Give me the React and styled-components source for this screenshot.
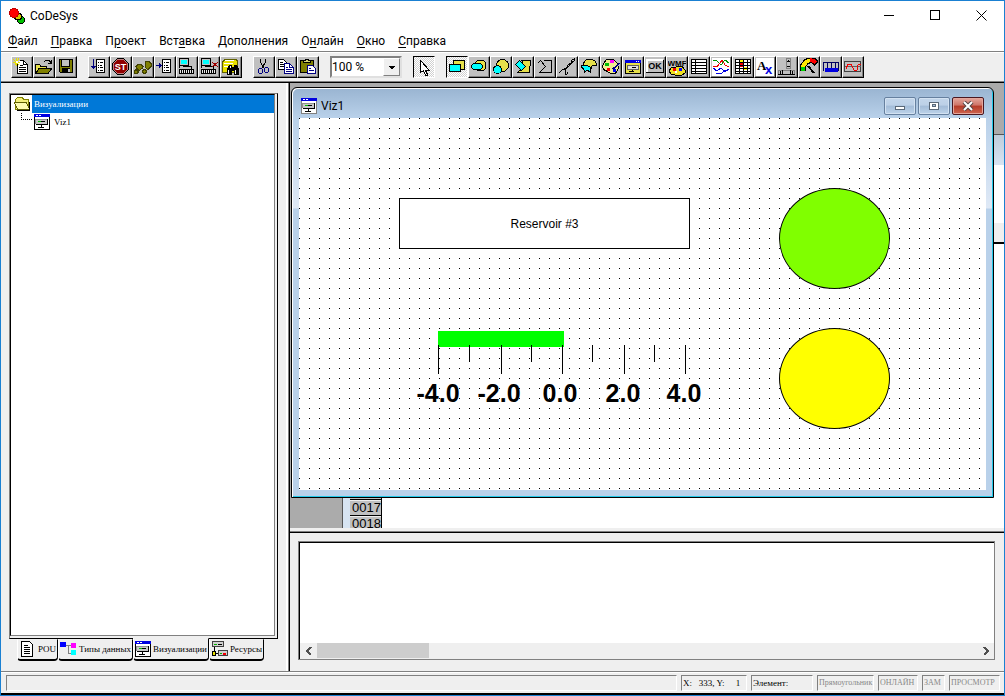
import { useState } from "react";
import styled, { createGlobalStyle, css } from 'styled-components';

const GlobalStyle = createGlobalStyle`
    * {
        box-sizing: border-box;
    }

    html, body, #root {
        height: 100%;
        margin: 0;
    }

    body {
        background: #efefef;
        color: #000;
        font-family: Roboto, 'Open Sans', sans-serif;
        font-size: 12px;
    }

    button, select, textarea {
        border: 0;
        border-radius: 0;
        color: inherit;
        font: inherit;
        margin: 0;
        padding: 0;
    }
`;

const AppFrame = styled.div`
    border: 1px solid #1a80d2;
    display: flex;
    flex-direction: column;
    height: 100%;
    min-height: 500px;
    overflow: hidden;
`;

const TitleBar = styled.header`
    align-items: center;
    background: #fff;
    display: flex;
    gap: 5px;
    height: 29px;
    padding-left: 8px;
`;

const AppTitle = styled.h1`
    flex: 1;
    font-size: 12px;
    font-weight: 400;
    margin: 0;
`;

const CaptionButtons = styled.div`
    display: flex;
`;

const CaptionButton = styled.button`
    align-items: center;
    background: none;
    display: flex;
    height: 28px;
    justify-content: center;
    width: 46px;
`;

const MenuBar = styled.nav`
    align-items: center;
    background: #fff;
    border-bottom: 1px solid #808080;
    display: flex;
    gap: 13px;
    height: 22px;
    padding: 0 7px;
`;

const MenuItem = styled.button`
    background: none;
    line-height: 20px;
    white-space: nowrap;

    u {
        text-underline-offset: 2px;
    }
`;

const ToolBar = styled.div`
    align-items: center;
    border-bottom: 1px solid #000;
    box-shadow: inset 0 1px #fff, inset 0 -1px #808080;
    display: flex;
    flex-shrink: 0;
    gap: 11px;
    height: 31px;
    padding: 0 10px;
`;

const ToolGroup = styled.div`
    display: flex;
`;

const ToolButton = styled.button`
    align-items: flex-start;
    background: #c0c0c0;
    border: 1px solid;
    border-color: #fff #000 #000 #fff;
    box-shadow: inset -1px -1px #808080;
    display: flex;
    height: 22px;
    padding: 1px;
    width: 22px;

    ${({ $pressed }) => $pressed && css`
        background: repeating-conic-gradient(#fff 0 25%, #d0d0d0 0 50%) 0 0 / 2px 2px;
        border-color: #000 #fff #fff #000;
        box-shadow: none;
    `}
`;

const ZoomBox = styled.label`
    background: #fff;
    border: 2px solid;
    border-color: #808080 #e0e0e0 #e0e0e0 #808080;
    display: grid;
    height: 22px;
    width: 72px;
`;

const ZoomSelect = styled.select`
    appearance: none;
    background: none;
    grid-area: 1 / 1;
`;

const ZoomArrow = styled.span`
    align-items: center;
    background: #efefef;
    border: 1px solid;
    border-color: #fff #808080 #808080 #fff;
    display: flex;
    grid-area: 1 / 1;
    justify-content: center;
    justify-self: end;
    pointer-events: none;
    width: 17px;
`;

const Workspace = styled.main`
    display: flex;
    flex: 1;
    min-height: 0;
`;

const SidePanel = styled.aside`
    border-right: 1px solid #000;
    box-shadow: inset -1px 0 #808080, inset -3px 0 #fff;
    display: flex;
    flex: 0 0 289px;
    flex-direction: column;
    padding: 10px 11px 10px 8px;
`;

const TreeFrame = styled.div`
    border: 1px solid;
    border-color: #808080 #000 #000 #808080;
    display: flex;
    flex: 1;
    padding: 0 2px 2px 0;
`;

const Tree = styled.ul`
    background: #fff;
    border: 1px solid;
    border-color: #000 #808080 #808080 #000;
    flex: 1;
    list-style: none;
    margin: 0;
    padding: 0 0 0 3px;
`;

const TreeRow = styled.li`
    align-items: center;
    display: flex;
    font-family: 'Liberation Serif', serif;
    font-size: 9px;
    gap: 2px;
    height: 18px;
    padding-left: ${({ $level }) => $level * 7}px;
`;

const TreeLabel = styled.span`
    background: ${({ $selected }) => ($selected ? '#0078d7' : 'none')};
    color: ${({ $selected }) => ($selected ? '#fff' : '#000')};
    flex: 1;
    line-height: 18px;
    padding-left: 2px;
`;

const TreeBranch = styled.span`
    align-self: flex-start;
    border-bottom: 1px dotted #000;
    border-left: 1px dotted #000;
    height: 7px;
    width: 11px;
`;

const TabList = styled.div`
    display: flex;
    height: 22px;
    padding-left: 8px;
`;

const Tab = styled.button`
    align-items: center;
    background: #efefef;
    border: 1px solid;
    border-color: transparent #000 #000 #fff;
    border-bottom-width: 2px;
    border-radius: 0 0 4px 4px;
    display: flex;
    flex: 0 0 auto;
    font-family: 'Liberation Serif', serif;
    font-size: 9px;
    gap: 2px;
    padding: 0 1px 1px 1px;
    white-space: nowrap;

    ${({ $active }) => $active && css`
        border-top-color: #efefef;
        margin-top: -1px;
    `}
`;

const MainColumn = styled.section`
    display: flex;
    flex: 1;
    flex-direction: column;
    min-width: 0;
`;

const Desktop = styled.div`
    background: #ababab;
    flex: 1;
    min-height: 0;
    overflow: hidden;
    position: relative;
`;

const EditorWindow = styled.div`
    background: #d7e4f2;
    border-left: 1px solid #555;
    border-top: 1px solid #555;
    display: flex;
    flex-direction: column;
    inset: 51px 0 0 52px;
    padding-left: 7px;
    position: absolute;
`;

const EditorTitle = styled.div`
    background: linear-gradient(#bfcddb, #d7e4f2);
    flex: 0 0 30px;
`;

const Declarations = styled.div`
    background: #fff;
    border-bottom: 2px solid #000;
    flex: 0 0 79px;
    padding-top: 58px;
`;

const DeclarationScroll = styled.div`
    background: #efefef;
    height: 19px;
`;

const CodeLines = styled.ol`
    background: #fff;
    flex: 1;
    list-style: none;
    margin: 0;
    min-height: 0;
    overflow: hidden;
    padding: 0;
`;

const CodeLine = styled.li`
    background: #c0c0c0;
    border-bottom: 1px solid #000;
    border-right: 1px solid #000;
    box-shadow: inset 0 1px #efefef;
    font: 13px/16px 'Liberation Sans', Arial, sans-serif;
    height: 16px;
    padding-left: 2px;
    width: 32px;
`;

const VizWindow = styled.div`
    background: linear-gradient(#99b4d1, #b9d1ea 30px, #dfe9f6 120px, #b9d1ea 121px);
    border: 1px solid #000;
    border-radius: 6px 6px 0 0;
    box-shadow: inset 1px 1px #fff, inset -1px -1px #22c8e8;
    display: flex;
    flex-direction: column;
    inset: 4px 10px 30px 1px;
    padding: 0 7px 7px 7px;
    position: absolute;
`;

const VizTitleBar = styled.div`
    align-items: center;
    display: flex;
    flex: 0 0 30px;
    gap: 4px;
    padding: 5px 2px 0 2px;
`;

const VizTitle = styled.h2`
    flex: 1;
    font-size: 12px;
    font-weight: 400;
    margin: 0;
`;

const VizButtons = styled.div`
    display: flex;
    gap: 2px;
`;

const VizButton = styled.button`
    align-items: center;
    background: ${({ $close }) => ($close
        ? 'linear-gradient(#e3a79d, #cf7467 45%, #b53a27 50%, #ce6550)'
        : 'linear-gradient(#c3d6eb, #bcd0e7 45%, #a3bcd8 50%, #bdd3ea)')};
    border: 1px solid ${({ $close }) => ($close ? '#4a1720' : '#66809f')};
    border-radius: 2px;
    box-shadow: inset 0 0 0 1px ${({ $close }) => ($close ? '#e4a69c' : '#d3e2f2')};
    display: flex;
    height: 18px;
    justify-content: center;
    width: 32px;
`;

const Canvas = styled.div`
    background-color: #fff;
    background-image: conic-gradient(from 0deg at 1px 1px, transparent 75%, #000 0);
    background-size: 10px 10px;
    flex: 1;
    min-height: 0;
    overflow: hidden;
    position: relative;
`;

const CanvasItem = styled.div`
    height: ${({ $h }) => $h}px;
    left: ${({ $x }) => $x}px;
    position: absolute;
    top: ${({ $y }) => $y}px;
    width: ${({ $w }) => $w}px;
`;

const Caption = styled(CanvasItem)`
    align-items: center;
    background: #fff;
    border: 1px solid #000;
    display: flex;
    font: 12px 'Liberation Sans', Arial, sans-serif;
    justify-content: center;
`;

const Lamp = styled(CanvasItem)`
    background: ${({ $color }) => $color};
    border: 1px solid #000;
    border-radius: 50%;
`;

const ScaleDrawing = styled.svg`
    display: block;
    font: bold 25px 'Liberation Sans', Arial, sans-serif;
    overflow: visible;
`;

const MessagePane = styled.div`
    border-top: 3px solid #efefef;
    box-shadow: inset 0 1px #808080, inset 0 2px #000;
    flex: 0 0 143px;
    padding: 10px 9px 11px 8px;
`;

const MessageFrame = styled.div`
    border: 1px solid #808080;
    box-shadow: inset 1px 1px #000;
    display: flex;
    flex-direction: column;
    height: 119px;
    padding: 1px 0 0 1px;
`;

const MessageText = styled.textarea`
    background: #fff;
    flex: 1;
    outline: none;
    resize: none;
`;

const ScrollBar = styled.div`
    background: #efefef;
    display: flex;
    height: 16px;
`;

const ScrollButton = styled.button`
    align-items: center;
    background: none;
    display: flex;
    justify-content: center;
    width: 17px;
`;

const ScrollTrack = styled.div`
    flex: 1;
`;

const ScrollThumb = styled.div`
    background: #cdcdcd;
    height: 15px;
    width: 112px;
`;

const StatusBar = styled.footer`
    border-bottom: 2px solid #000;
    border-top: 1px solid #808080;
    box-shadow: inset 0 1px #fff;
    display: flex;
    flex-shrink: 0;
    gap: 4px;
    height: 24px;
    padding: 3px 4px 2px 5px;
`;

const StatusCell = styled.span`
    border: 1px solid;
    border-color: #808080 #fff #fff #808080;
    color: ${({ $dim }) => ($dim ? '#888' : '#000')};
    flex: ${({ $w }) => ($w ? `0 0 ${$w}px` : '1')};
    font: ${({ $dim }) => ($dim ? '8px/14px' : '9px/14px')} 'Liberation Serif', serif;
    overflow: hidden;
    padding-left: 1px;
    white-space: pre;
`;

const Glyph = ({ size = 18, children }) => (
    <svg width={size} height={size} viewBox={`0 0 ${size} ${size}`} shapeRendering="crispEdges" fill="none" aria-hidden="true">
        {children}
    </svg>
);

const YELLOW = '#e6e04a';
const OLIVE = '#808000';
const CYAN = '#00ffff';
const NAVY = '#000080';

const Page = () => (
    <>
        <path d="M6.5 1.5h8v13h-8z" fill="#fff" stroke="#000" />
        <path d="M8 4.5h1M10 4.5h3M8 7.5h1M10 7.5h2M8 9.5h1M10 9.5h3M8 12.5h1M10 12.5h3" stroke="#000" />
    </>
);

const Computer = () => (
    <>
        <path d="M1.5.5h9v7h-9z" fill="#c0c0c0" stroke="#000" />
        <path d="M3 2h6v4H3z" fill={CYAN} />
        <path d="M5 8.5h8.5v3M1.5 8v2" stroke="#000" />
        <path d="M1.5 11.5h14v4h-14z" fill="#e8e8e8" stroke="#000" />
        <path d="M3.5 12v3M5.5 12v3M7.5 12v3M9.5 12v3M11.5 12v3M13.5 12v3" stroke="#000" />
    </>
);

const MonitorIcon = ({ frame = '#000' }) => (
    <Glyph size={16}>
        <path d="M.5.5h15v15H.5z" fill="#fff" stroke={frame} />
        <path d="M0 0h16v3H0z" fill="#0000e0" />
        <path d="M2 1.5h2M5 1.5h2" stroke="#fff" />
        <path d="M2 5h11v5H2z" fill="#c8c8c8" />
        <path d="M1.5 10V5.5H13" stroke="#909090" />
        <path d="M13.5 5v5.5H2M7 7.5h4" stroke="#000" />
        <path d="M4 7.5h3" stroke="#00c000" />
        <path d="M7.5 11v2M4 13.5h6" stroke="#000" />
    </Glyph>
);

const icons = {
    new: (
        <>
            <path d="M4.5 5.5v10h10v-9l-4-4h-4" fill="#fff" stroke="#000" />
            <path d="M10.5 2.5v4h4M7 7.5h3M6 9.5h7M6 11.5h7M6 13.5h7" stroke="#000" />
            <path d="M0 1l6 6M6 0L2 7M0 4.5h7M3.5 0v8" stroke="#e8e000" />
            <path d="M3 3h2v2H3z" fill="#fff" />
        </>
    ),
    open: (
        <>
            <path d="M.5 15V6.5h4l1 1.5h6v3" fill={YELLOW} stroke="#000" />
            <path d="M1 15.5l3-5.5h13l-4 5.5z" fill={OLIVE} stroke="#000" />
            <path d="M9 4l2-2h3l2 3M13 5.5h4M16.5 2v4" stroke="#000" />
        </>
    ),
    save: (
        <>
            <path d="M2.5 1.5h13v13h-12l-1-1z" fill={OLIVE} stroke="#000" />
            <path d="M5 2h8v6H5z" fill="#c0c0c0" />
            <path d="M5 10h8v4H5z" fill="#000" />
            <path d="M11 11h2v3h-2z" fill="#c0c0c0" />
            <path d="M4.5 2v6h8V2" stroke="#000" />
        </>
    ),
    stepOver: (
        <>
            <Page />
            <path d="M3.5 1v10M1 8.5h5M2 9.5h3" stroke={NAVY} />
        </>
    ),
    stop: (
        <>
            <path d="M5.5.5h6l5 5v6l-5 5h-6l-5-5v-6z" fill="#900000" stroke="#000" />
            <path d="M5.5 1.5h6l4 4v6l-4 4h-6l-4-4v-6z" stroke="#c08080" />
            <text x="8.5" y="12" fill="#fff" fontFamily="Liberation Sans" fontWeight="700" fontSize="9" textAnchor="middle">ST</text>
        </>
    ),
    feet: (
        <>
            <path d="M4 6.5h3l2 2-1 2-3 2-2-2-1-2zM1.5 11.5l2 1 1 2-2 1h-2v-2z" fill={OLIVE} stroke="#404000" />
            <path d="M12 3.5h3l2 2v3l-3 3-3-2v-3zM10.5 11.5l2 1v2l-2 1-2-1v-2z" fill={OLIVE} stroke="#404000" />
        </>
    ),
    stepIn: (
        <>
            <Page />
            <path d="M0 7.5h6M3.5 5v5M4.5 6v3" stroke={NAVY} />
        </>
    ),
    login: <Computer />,
    logout: (
        <>
            <Computer />
            <path d="M12 4l6 5M18 4l-6 5" stroke="#a00000" />
        </>
    ),
    search: (
        <>
            <path d="M.5 14V4l2-2 2-1h9l2 2v8l-3 3z" fill="#e8e000" stroke="#606000" />
            <path d="M3 2.5h9M2 5.5h9M2 8.5h6" stroke="#fff" />
            <path d="M5 11l2-4h3v2h2V7h3l2 4v6h-5v-4h-2v4H5z" fill="#000" />
            <path d="M6.5 12v4M13.5 12v4M8.5 8v2" stroke="#fff" />
        </>
    ),
    cut: (
        <>
            <path d="M5.5 1v3l4 7M10.5 1v3l-4 7" stroke="#000" />
            <path d="M4.5 10.5h2l1 1v3l-1 1h-2l-1-1v-3zM10.5 9.5h2l1 1v3l-1 1h-2l-1-1v-3z" stroke={NAVY} />
        </>
    ),
    copy: (
        <>
            <path d="M1.5 1.5h5l3 3v7h-8z" fill="#fff" stroke="#000" />
            <path d="M3 4.5h3M3 6.5h4M3 8.5h4" stroke="#000" />
            <path d="M7.5 5.5h5l4 4v6h-9z" fill="#fff" stroke={NAVY} />
            <path d="M12.5 6v3h3M9 9.5h2M9 11.5h6M9 13.5h6" stroke={NAVY} />
        </>
    ),
    paste: (
        <>
            <path d="M1.5 2.5h13v12h-13z" fill={OLIVE} stroke="#000" />
            <path d="M4.5 4.5v-2h2v-1h3v1h2v2z" fill="#d8d878" stroke="#000" />
            <path d="M8.5 7.5h5l3 3v5h-8z" fill="#fff" stroke={NAVY} />
            <path d="M10 10.5h2M10 12.5h5" stroke={NAVY} />
        </>
    ),
    pointer: <path d="M5.5 2.5v12l3-2 2 5h2v-1l-2-4h4z" fill="#fff" stroke="#000" />,
    rect: (
        <>
            <path d="M5.5 2.5h11v9h-11z" fill={YELLOW} stroke="#000" />
            <path d="M1.5 6.5h11v7h-11z" fill={CYAN} stroke="#000" />
        </>
    ),
    roundRect: (
        <>
            <path d="M7.5 2.5h6l2 2v6l-2 2h-6l-2-2v-6z" fill={YELLOW} stroke="#000" />
            <path d="M3.5 5.5h7l2 2v2l-2 2h-7l-2-2v-2z" fill={CYAN} stroke="#000" />
        </>
    ),
    ellipse: (
        <>
            <circle cx="10.5" cy="7.5" r="6" fill={YELLOW} stroke="#000" />
            <circle cx="5.5" cy="11.5" r="4" fill={CYAN} stroke="#000" />
        </>
    ),
    polygon: (
        <>
            <path d="M8 2.5h8.5l-1 12h-12l6-5z" fill={YELLOW} stroke="#000" />
            <path d="M1.5 6.5l4-4 6 6-4 4z" fill={CYAN} stroke="#000" />
        </>
    ),
    polyline: <path d="M8 2.5h7.5v12h-12l5-5M1.5 5.5l3-3 5 6-1 1" stroke="#000" />,
    curve: <path d="M1 15l3-3 5-2 4-4 1-4 2-1v2l-6 4-3 5v4h2l1-2" stroke="#000" />,
    pie: (
        <>
            <path d="M3 6l3-4 5-1 4 2 2 4-5 1-2 3H7z" fill={YELLOW} stroke="#000" />
            <path d="M1 8l4-1 3 1 4 2-2 1v3l-3-2-3 3v-3z" fill={CYAN} stroke="#000" />
        </>
    ),
    bitmap: (
        <>
            <path d="M1.5 5.5l3-4h7l4 4 1 5-3 5h-5l-3-2-4-2-1-3z" fill="#f0ec90" stroke="#000" />
            <path d="M8 2h4v3H8z" fill="#ff00ff" />
            <path d="M3 5h4v3H3z" fill="#00c000" />
            <path d="M5 10h3v3H5z" fill="#ff0000" />
            <path d="M11 11h3v3h-3z" fill="#0000ff" />
            <path d="M17.5 5l-5 5-2 1" stroke={NAVY} strokeWidth="2" />
        </>
    ),
    visualization: (
        <>
            <path d="M1.5 2.5h15v13h-15z" fill={YELLOW} stroke="#000" />
            <path d="M1 2h16v3H1z" fill="#0000e0" />
            <path d="M12 3.5h1M14 3.5h1" stroke="#fff" />
            <path d="M3.5 7.5h11v4h-11z" fill="#e0e0e0" stroke="#606060" />
            <path d="M8 9.5h4M8.5 12v2M5 13.5h5" stroke="#000" />
        </>
    ),
    ok: (
        <>
            <path d="M1 14V2h16" stroke="#fff" strokeWidth="2" />
            <path d="M0 14.5h17.5V2" stroke="#000" />
            <text x="9" y="11" fill="#000" fontFamily="Liberation Sans" fontWeight="700" fontSize="9" textAnchor="middle">OK</text>
        </>
    ),
    wmf: (
        <>
            <path d="M1 13l2-3 5-1 6-1 3 4v3l-3 2H7l-4-1z" fill="#f0e020" stroke="#000" />
            <path d="M5 10h3v3H5z" fill="#ff0000" />
            <path d="M11 10h3v3h-3z" fill="#0000ff" />
            <path d="M7 13h2v2H7z" fill="#fff" />
            <text x="9" y="8" fill="#000" fontFamily="Liberation Sans" fontWeight="700" fontSize="8" textAnchor="middle">WMF</text>
        </>
    ),
    table: (
        <>
            <path d="M1.5 1.5h15v14h-15z" fill="#fff" stroke="#000" />
            <path d="M1 4.5h16M1 7.5h16M1 10.5h16M1 13.5h16M5.5 1v15" stroke="#000" />
        </>
    ),
    trend: (
        <>
            <path d="M0 0h18v18H0z" fill="#fff" />
            <path d="M1 3l3-1 5 5 4-5 4 3" stroke="#009000" />
            <path d="M1 8l4 1 5-7 3 5 4 2" stroke="#f00000" />
            <path d="M1 10l4 3 4-3 4 4 4-3M4 15l5 1 3-3 4-1" stroke="#0000e0" />
        </>
    ),
    alarm: (
        <>
            <path d="M1.5 1.5h15v14h-15z" fill="#fff" stroke="#000" />
            <path d="M6 2h4v3H6zM10 9h3v3h-3z" fill="#ffff00" />
            <path d="M6 5h4v4H6z" fill="#f00000" />
            <path d="M1 4.5h16M1 7.5h16M1 10.5h16M1 13.5h16M5.5 1v15M9.5 1v15M13.5 1v15" stroke="#000" />
        </>
    ),
    activex: (
        <>
            <path d="M0 0h18v18H0z" fill="#fff" />
            <text x="1" y="12" fill="#000" fontFamily="Liberation Serif" fontWeight="700" fontSize="13">A</text>
            <text x="9" y="16" fill="#0000e0" fontFamily="Liberation Sans" fontWeight="700" fontSize="13">x</text>
        </>
    ),
    scrollbar: (
        <>
            <path d="M8.5.5h4v10h-4zM.5 12.5h16v4H.5z" fill="#c0c0c0" stroke="#808080" />
            <path d="M10 2.5h1M9 3.5h3M9 8.5h3M2.5 13v3M4.5 12v5M12.5 12v5M14.5 13v3M0 16.5h17" stroke="#000" />
        </>
    ),
    meter: (
        <>
            <path d="M3 13V8l3-4 4-2 4 1 3 3" stroke="#000" strokeWidth="6" />
            <path d="M3 13V9" stroke="#00d000" strokeWidth="4" />
            <path d="M3 9V8l3-4 4-2" stroke="#ffe800" strokeWidth="4" />
            <path d="M10 2l4 1 2 2" stroke="#ff0000" strokeWidth="4" />
            <path d="M8 8l6 7" stroke="#000" strokeWidth="2" />
        </>
    ),
    bar: (
        <>
            <path d="M1.5 13V4M5.5 10V4M9.5 10V4M13.5 10V4M16.5 13V4M1 4.5h16" stroke="#000060" />
            <path d="M3 10h13v4H3z" fill="#0000e0" />
        </>
    ),
    histogram: (
        <>
            <path d="M.5 3.5h16v10H.5z" stroke="#404040" />
            <path d="M1 8.5h16" stroke="#606060" />
            <path d="M2 11l2-5h3l3 6h3l1-5 3-1" stroke="#f00000" />
        </>
    ),
};

const toolGroups = [
    [['new', 'Создать'], ['open', 'Открыть'], ['save', 'Сохранить']],
    [['stepOver', 'Шаг'], ['stop', 'Стоп'], ['feet', 'Трассировка'], ['stepIn', 'Шаг внутрь'], ['login', 'Подключение'], ['logout', 'Отключение'], ['search', 'Поиск']],
    [['cut', 'Вырезать'], ['copy', 'Копировать'], ['paste', 'Вставить']],
];

const drawTools = ['rect', 'roundRect', 'ellipse', 'polygon', 'polyline', 'curve', 'pie', 'bitmap', 'visualization', 'ok', 'wmf', 'table', 'trend', 'alarm', 'activex', 'scrollbar', 'meter', 'bar', 'histogram'];

const menu = [
    ['', 'Ф', 'айл'],
    ['', 'П', 'равка'],
    ['П', 'р', 'оект'],
    ['Вст', 'а', 'вка'],
    ['', 'Д', 'ополнения'],
    ['О', 'н', 'лайн'],
    ['', 'О', 'кно'],
    ['', 'С', 'правка'],
];

const DocIcon = () => (
    <Glyph size={17}>
        <path d="M2.5.5h8l3 3v12h-11z" fill="#fff" stroke="#000" />
        <path d="M5 4.5h4M5 6.5h6M5 8.5h6M5 10.5h6M5 12.5h6" stroke="#000" />
    </Glyph>
);

const TypesIcon = () => (
    <Glyph size={17}>
        <path d="M6 4h5M8.5 4v8h3" stroke="#808080" />
        <path d="M0 1h6v5H0z" fill="#0000ff" />
        <path d="M11 2h5v5h-5z" fill="#ff00ff" />
        <path d="M11 9h5v5h-5z" fill={CYAN} />
    </Glyph>
);

const ResourcesIcon = () => (
    <Glyph size={17}>
        <path d="M1.5.5h11v5h-11zM7.5 9.5h9v5h-9z" fill="#d0d0d0" stroke="#404040" />
        <path d="M3 3.5h3M9 12.5h2" stroke="#00b000" />
        <path d="M7 3.5h4" stroke="#000" />
        <path d="M12 12.5h3" stroke="#f00000" strokeWidth="2" />
        <path d="M3.5 6v4M5 12.5h2" stroke="#000" />
        <path d="M1.5 10.5h3v4h-3z" fill="#e8e000" stroke="#000" />
    </Glyph>
);

const FolderIcon = () => (
    <Glyph size={16}>
        <path d="M1.5 3.5l2-2h5l1 2h5v10h-13z" fill="#f4f07a" stroke="#808000" />
        <path d="M.5 6.5h12l3 7h-12z" fill="#fffdb0" stroke="#606000" />
        <path d="M3 14.5h12.5V6" stroke="#000" />
    </Glyph>
);

const tabs = [
    ['POU', DocIcon],
    ['Типы данных', TypesIcon],
    ['Визуализации', MonitorIcon],
    ['Ресурсы', ResourcesIcon],
];

const scaleLabels = [[21, '-4.0'], [82, '-2.0'], [143, '0.0'], [206, '2.0'], [267, '4.0']];

const Scale = () => (
    <CanvasItem $x={118} $y={213} $w={290} $h={74}>
        <ScaleDrawing width="290" height="74" role="img" aria-label="Reservoir level">
            <path d="M21 0h126v16H21z" fill="#00ff00" />
            <path
                d="M21.5 14v29M84.5 14v29M145.5 14v29M207.5 14v29M268.5 14v29M52.5 14v17M114.5 14v17M175.5 14v17M237.5 14v17"
                stroke="#000"
            />
            {scaleLabels.map(([x, label]) => (
                <text key={label} x={x} y="71" textAnchor="middle">{label}</text>
            ))}
        </ScaleDrawing>
    </CanvasItem>
);

export default function App() {
    const [tool, setTool] = useState('rect');
    const [activeTab, setActiveTab] = useState('Визуализации');
    const [zoom, setZoom] = useState('100 %');

    return (
        <AppFrame>
            <GlobalStyle />
            <TitleBar>
                <svg width="16" height="16" viewBox="0 0 16 16" stroke="#000" shapeRendering="crispEdges" aria-hidden="true">
                    <circle cx="12" cy="12" r="3.5" fill="#00c000" />
                    <circle cx="9" cy="8.5" r="3.5" fill="#d8c800" />
                    <circle cx="5" cy="5" r="4.5" fill="#ff0000" stroke="#c00000" />
                </svg>
                <AppTitle>CoDeSys</AppTitle>
                <CaptionButtons>
                    <CaptionButton aria-label="Свернуть">
                        <Glyph size={11}><path d="M0 5.5h10" stroke="#000" /></Glyph>
                    </CaptionButton>
                    <CaptionButton aria-label="Развернуть">
                        <Glyph size={11}><path d="M.5.5h9v9h-9z" stroke="#000" /></Glyph>
                    </CaptionButton>
                    <CaptionButton aria-label="Закрыть">
                        <svg width="11" height="11" viewBox="0 0 11 11" aria-hidden="true">
                            <path d="M.5.5l10 10M10.5.5l-10 10" stroke="#000" />
                        </svg>
                    </CaptionButton>
                </CaptionButtons>
            </TitleBar>
            <MenuBar>
                {menu.map(([before, key, after]) => (
                    <MenuItem key={before + key + after}>{before}<u>{key}</u>{after}</MenuItem>
                ))}
            </MenuBar>
            <ToolBar>
                {toolGroups.map((group) => (
                    <ToolGroup key={group[0][0]}>
                        {group.map(([name, label]) => (
                            <ToolButton key={name} aria-label={label}>
                                <Glyph>{icons[name]}</Glyph>
                            </ToolButton>
                        ))}
                    </ToolGroup>
                ))}
                <ZoomBox>
                    <ZoomSelect aria-label="Масштаб" value={zoom} onChange={(e) => setZoom(e.target.value)}>
                        <option>100 %</option>
                    </ZoomSelect>
                    <ZoomArrow>
                        <Glyph size={7}><path d="M0 2h7L3.5 5.5z" fill="#000" /></Glyph>
                    </ZoomArrow>
                </ZoomBox>
                <ToolGroup>
                    <ToolButton $pressed aria-label="Выбор"><Glyph>{icons.pointer}</Glyph></ToolButton>
                </ToolGroup>
                <ToolGroup>
                    {drawTools.map((name) => (
                        <ToolButton key={name} aria-label={name} $pressed={tool === name} onClick={() => setTool(name)}>
                            <Glyph>{icons[name]}</Glyph>
                        </ToolButton>
                    ))}
                </ToolGroup>
            </ToolBar>
            <Workspace>
                <SidePanel>
                    <TreeFrame>
                        <Tree>
                            <TreeRow $level={0}>
                                <FolderIcon />
                                <TreeLabel $selected>Визуализации</TreeLabel>
                            </TreeRow>
                            <TreeRow $level={1}>
                                <TreeBranch />
                                <MonitorIcon />
                                <TreeLabel>Viz1</TreeLabel>
                            </TreeRow>
                        </Tree>
                    </TreeFrame>
                    <TabList role="tablist">
                        {tabs.map(([label, Icon]) => (
                            <Tab
                                key={label}
                                role="tab"
                                aria-selected={activeTab === label}
                                $active={activeTab === label}
                                onClick={() => setActiveTab(label)}
                            >
                                <Icon />
                                {label}
                            </Tab>
                        ))}
                    </TabList>
                </SidePanel>
                <MainColumn>
                    <Desktop>
                        <EditorWindow>
                            <EditorTitle />
                            <Declarations><DeclarationScroll /></Declarations>
                            <CodeLines>
                                {Array.from({ length: 18 }, (_, i) => (
                                    <CodeLine key={i}>{String(i + 1).padStart(4, '0')}</CodeLine>
                                ))}
                            </CodeLines>
                        </EditorWindow>
                        <VizWindow>
                            <VizTitleBar>
                                <MonitorIcon frame="#808080" />
                                <VizTitle>Viz1</VizTitle>
                                <VizButtons>
                                    <VizButton aria-label="Свернуть окно">
                                        <Glyph size={12}><path d="M1.5 6.5h9v3h-9z" fill="#fff" stroke="#5a6878" /></Glyph>
                                    </VizButton>
                                    <VizButton aria-label="Развернуть окно">
                                        <Glyph size={12}>
                                            <path d="M1.5 2.5h9v7h-9z" fill="#fff" stroke="#5a6878" />
                                            <path d="M4.5 4.5h3v2h-3z" fill="#a9c0da" stroke="#5a6878" />
                                        </Glyph>
                                    </VizButton>
                                    <VizButton $close aria-label="Закрыть окно">
                                        <svg width="12" height="10" viewBox="0 0 12 10" aria-hidden="true">
                                            <path d="M2 1l8 8M10 1L2 9" stroke="#544" strokeWidth="4" />
                                            <path d="M2 1l8 8M10 1L2 9" stroke="#fff" strokeWidth="2" />
                                        </svg>
                                    </VizButton>
                                </VizButtons>
                            </VizTitleBar>
                            <Canvas>
                                <Caption $x={100} $y={80} $w={291} $h={51}>Reservoir #3</Caption>
                                <Lamp $x={480} $y={70} $w={111} $h={101} $color="#80ff00" />
                                <Lamp $x={480} $y={210} $w={111} $h={101} $color="#ffff00" />
                                <Scale />
                            </Canvas>
                        </VizWindow>
                    </Desktop>
                    <MessagePane>
                        <MessageFrame>
                            <MessageText readOnly aria-label="Сообщения" />
                            <ScrollBar>
                                <ScrollButton aria-label="Прокрутить влево">
                                    <Glyph size={8}><path d="M6 0L2 4l4 4" stroke="#505050" strokeWidth="2" /></Glyph>
                                </ScrollButton>
                                <ScrollTrack><ScrollThumb /></ScrollTrack>
                                <ScrollButton aria-label="Прокрутить вправо">
                                    <Glyph size={8}><path d="M2 0l4 4-4 4" stroke="#505050" strokeWidth="2" /></Glyph>
                                </ScrollButton>
                            </ScrollBar>
                        </MessageFrame>
                    </MessagePane>
                </MainColumn>
            </Workspace>
            <StatusBar>
                <StatusCell />
                <StatusCell $w={66}>{'X:   333, Y:     1'}</StatusCell>
                <StatusCell $w={62}>Элемент:</StatusCell>
                <StatusCell $w={57} $dim>Прямоугольник</StatusCell>
                <StatusCell $w={40} $dim>ОНЛАЙН</StatusCell>
                <StatusCell $w={23} $dim>ЗАМ</StatusCell>
                <StatusCell $w={51} $dim>ПРОСМОТР</StatusCell>
            </StatusBar>
        </AppFrame>
    );
}
